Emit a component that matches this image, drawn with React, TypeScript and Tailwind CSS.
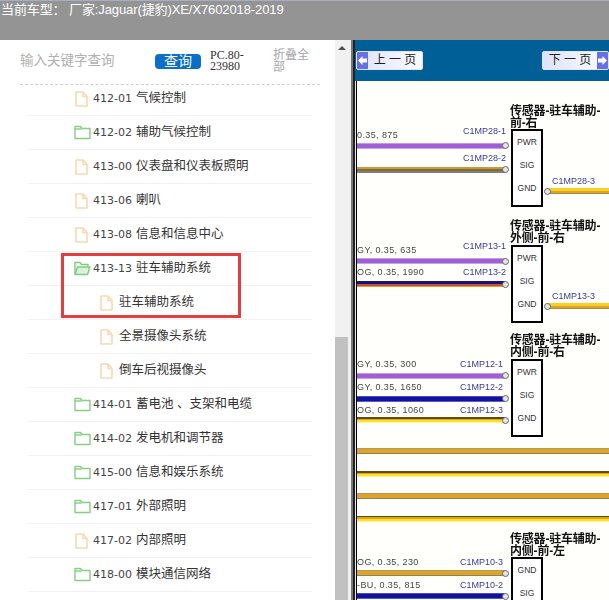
const tree = [
  { code: "412-01", name: "气候控制", icon: "file" },
  { code: "412-02", name: "辅助气候控制", icon: "folder" },
  { code: "413-00", name: "仪表盘和仪表板照明", icon: "file" },
  { code: "413-06", name: "喇叭", icon: "file" },
  { code: "413-08", name: "信息和信息中心", icon: "file" },
  { code: "413-13", name: "驻车辅助系统", icon: "open" },
  { name: "驻车辅助系统", icon: "file", child: true },
  { name: "全景摄像头系统", icon: "file", child: true },
  { name: "倒车后视摄像头", icon: "file", child: true },
  { code: "414-01", name: "蓄电池 、支架和电缆", icon: "folder" },
  { code: "414-02", name: "发电机和调节器", icon: "folder" },
  { code: "415-00", name: "信息和娱乐系统", icon: "folder" },
  { code: "417-01", name: "外部照明", icon: "folder" },
  { code: "417-02", name: "内部照明", icon: "file" },
  { code: "418-00", name: "模块通信网络", icon: "folder" },
];

const PURPLE = "linear-gradient(#c49ae6 0 20%, #a05fd4 20% 80%, #c9a2ea 80%)";
const BROWN = "linear-gradient(#c89a3a 0 30%, #8a6a2c 30% 60%, #7d7d7d 60%)";
const NAVY_RED = "linear-gradient(#14147a 0 50%, #c8503a 50% 80%, #d9a030 80%)";
const NAVY = "linear-gradient(#4a4ad0 0 20%, #12129c 20% 80%, #5a5ac8 80%)";
const GOLD = "linear-gradient(#b89a50 0 18%, #dca42a 18% 82%, #8d8256 82%)";
const YELLOW = "linear-gradient(#5c4a20 0 25%, #e0a020 25% 50%, #ffe21e 50% 85%, #fff4a0 85%)";
const AMBER = "linear-gradient(#f7d020 0 45%, #dca42a 45% 80%, #a88a40 80%)";

const wires = [
  { y: 143, x: 357, w: 148, bg: PURPLE },
  { y: 167, x: 357, w: 148, bg: BROWN },
  { y: 188, x: 547, w: 62, bg: AMBER },
  { y: 258, x: 357, w: 148, bg: PURPLE },
  { y: 281, x: 357, w: 148, bg: NAVY_RED },
  { y: 303, x: 547, w: 62, bg: AMBER },
  { y: 373, x: 357, w: 148, bg: PURPLE },
  { y: 396, x: 357, w: 148, bg: NAVY },
  { y: 417, x: 357, w: 148, bg: YELLOW },
  { y: 448, x: 357, w: 252, bg: GOLD },
  { y: 471, x: 357, w: 252, bg: YELLOW },
  { y: 493, x: 357, w: 252, bg: GOLD },
  { y: 516, x: 357, w: 252, bg: YELLOW },
  { y: 570, x: 357, w: 148, bg: GOLD },
  { y: 593, x: 357, w: 148, bg: NAVY },
];

const labels = [
  { x: 463, y: 131, t: "C1MP28-1" },
  { x: 463, y: 158, t: "C1MP28-2" },
  { x: 552, y: 181, t: "C1MP28-3" },
  { x: 463, y: 246, t: "C1MP13-1" },
  { x: 463, y: 272, t: "C1MP13-2" },
  { x: 552, y: 296, t: "C1MP13-3" },
  { x: 460, y: 364, t: "C1MP12-1" },
  { x: 460, y: 387, t: "C1MP12-2" },
  { x: 460, y: 410, t: "C1MP12-3" },
  { x: 460, y: 562, t: "C1MP10-3" },
  { x: 460, y: 585, t: "C1MP10-2" },
];

const specs = [
  { y: 135, t: "0.35, 875" },
  { y: 250, t: "GY, 0.35, 635" },
  { y: 272, t: "OG, 0.35, 1990" },
  { y: 364, t: "GY, 0.35, 300" },
  { y: 387, t: "GY, 0.35, 1650" },
  { y: 410, t: "OG, 0.35, 1060" },
  { y: 562, t: "OG, 0.35, 230" },
  { y: 585, t: "-BU, 0.35, 815" },
];

const sensors = [
  { y: 105, box: 129, h: 78, lines: ["传感器-驻车辅助-", "前-右"], pins: ["PWR", "SIG", "GND"] },
  { y: 220, box: 245, h: 78, lines: ["传感器-驻车辅助-", "外侧-前-右"], pins: ["PWR", "SIG", "GND"] },
  { y: 334, box: 359, h: 78, lines: ["传感器-驻车辅助-", "内侧-前-右"], pins: ["PWR", "SIG", "GND"] },
  { y: 533, box: 557, h: 78, lines: ["传感器-驻车辅助-", "内侧-前-左"], pins: ["GND", "SIG"] },
];

const pinDots = [
  [505, 145], [505, 169], [547, 191],
  [505, 261], [505, 284], [547, 306],
  [505, 375], [505, 398], [505, 420],
  [505, 573], [505, 596],
];

function FileIcon() {
  return (
    <svg width="15" height="16" viewBox="0 0 15 16" fill="none" stroke="#f7d9b2" strokeWidth="1.6" className="shrink-0">
      <path d="M2 1h7l4 4.5V15H2z" strokeLinejoin="round" />
      <path d="M9 1v4.5h4" />
    </svg>
  );
}

function FolderIcon() {
  return (
    <svg width="17" height="15" viewBox="0 0 17 15" fill="none" stroke="#86cd86" strokeWidth="1.4" className="shrink-0">
      <path d="M1 13.5V1.5h5.5l1.5 2h8v10z" strokeLinejoin="round" />
      <path d="M1 4h6.5" />
    </svg>
  );
}

function OpenFolderIcon() {
  return (
    <svg width="17" height="15" viewBox="0 0 17 15" fill="none" stroke="#7fcb7f" strokeWidth="1.4" className="shrink-0">
      <path d="M1 13.5V1.5h5l1.5 2H14V6" strokeLinejoin="round" />
      <path d="M1 13.5 3.5 6H16l-2.5 7.5z" strokeLinejoin="round" fill="#d9f1d9" />
    </svg>
  );
}

function PageButton({ label, side }: { label: string; side: "left" | "right" }) {
  const arrow = (
    <div className="flex h-full w-[11px] items-center justify-center bg-[#6670e4]">
      <svg width="9" height="9" viewBox="0 0 9 9" fill="#fff">
        {side === "left" ? <path d="M0 4.5 4.5 0v2.5H9v4H4.5V9z" /> : <path d="M9 4.5 4.5 0v2.5H0v4h4.5V9z" />}
      </svg>
    </div>
  );
  return (
    <div className="flex h-[19px] w-[67px] items-center overflow-hidden rounded-[2px] border border-[#dfe4fb] bg-gradient-to-r from-[#dfe3fa] to-[#fbfbff]">
      {side === "left" && arrow}
      <span className="flex-1 text-center text-[12px] whitespace-pre text-[#222]">{label}</span>
      {side === "right" && arrow}
    </div>
  );
}

export default function App() {
  return (
    <div className="h-[600px] w-[609px] overflow-hidden bg-white font-['Liberation_Sans','Noto_Sans_CJK_SC',sans-serif]">
      <div className="h-10 border-t border-[#a9adc4] bg-[#949494] pl-px text-[13px] leading-[17px] tracking-[-0.1px] text-white">
        当前车型： 厂家:Jaguar(捷豹)XE/X7602018-2019
      </div>
      <div className="flex h-[560px]">
        <div className="relative w-[335px] shrink-0 overflow-hidden">
          <div className="mx-5 flex h-[45px] w-[300px] items-center border-b border-dashed border-[#cfcfcf] pb-[2px]">
            <span className="w-[135px] text-[13.5px] text-[#b0b0b0]">输入关键字查询</span>
            <button className="flex h-[15px] w-[46px] items-center justify-center rounded-[4px] bg-[#0a6fc9] text-[14px] text-white">
              查询
            </button>
            <span className="ml-[9px] w-[50px] font-['Liberation_Serif',serif] text-[12px] leading-[11px] text-[#333]">
              PC.80-23980
            </span>
            <span className="ml-[13px] w-[37px] text-[12px] leading-[12px] text-[#a5a5a5]">折叠全部</span>
          </div>
          <div className="-mt-[3px]">
            {tree.map((row, i) => (
              <div
                key={i}
                className={`ml-7 flex h-[34px] w-[284px] items-center border-b border-[#f1f1f1] text-[12.5px] text-[#333] ${row.child ? "pl-[71px]" : "pl-[46px]"}`}
              >
                <div className={`flex items-center ${row.child ? "w-[20px]" : "w-[19px]"}`}>
                  {row.icon === "file" && <FileIcon />}
                  {row.icon === "folder" && <FolderIcon />}
                  {row.icon === "open" && <OpenFolderIcon />}
                </div>
                <span className="whitespace-nowrap">
                  {row.code && (
                    <span className="mr-[4px] font-['DejaVu_Sans',sans-serif] text-[11px] text-[#444]">{row.code}</span>
                  )}
                  {row.name}
                </span>
              </div>
            ))}
          </div>
          {/* red mark over the selected rows */}
          <div className="absolute left-[61px] top-[213px] h-[65px] w-[180px] border-[3px] border-[#e53e3e]" />
        </div>
        <div className="flex w-4 shrink-0 flex-col bg-[#f1f1f1] pr-[3px]">
          <div className="flex h-[297px] justify-center pt-[6px]">
            <div className="h-0 w-0 border-x-[4px] border-b-[4px] border-x-transparent border-b-[#505050]" />
          </div>
          <div className="flex-1 bg-[#c1c1c1]" />
        </div>
        <div className="w-[4px] shrink-0 border-r-2 border-[#222] bg-[#777]" />
        <div className="flex min-w-0 flex-1 flex-col">
          <div className="flex h-[41px] items-center justify-between bg-[#005f96] pb-[1px] pl-px">
            <PageButton label="上 一 页" side="left" />
            <PageButton label="下 一 页" side="right" />
          </div>
          <div className="flex-1 border-l border-[#e8e8e8]">
            <div className="h-full border-l-[1.5px] border-black bg-[#fffffb]" />
          </div>
        </div>
      </div>

      {/* wiring diagram: free canvas over the right pane, in page coordinates */}
      <div className="pointer-events-none absolute left-0 top-0 h-[600px] w-[609px] overflow-hidden blur-[0.3px]">
        {wires.map((w, i) => (
          <div
            key={i}
            className="absolute h-[6px]"
            style={{ left: w.x, top: w.y, width: w.w, background: w.bg }}
          />
        ))}
        {pinDots.map(([x, y], i) => (
          <div
            key={i}
            className="absolute h-[7px] w-[7px] rounded-full border border-[#666] bg-[#e4e4e4]"
            style={{ left: x - 3, top: y - 3 }}
          />
        ))}
        {specs.map((s, i) => (
          <div
            key={i}
            className="absolute text-[9px] leading-[11px] tracking-[0.4px] whitespace-nowrap text-[#444]"
            style={{ left: 357, top: s.y - 5 }}
          >
            {s.t}
          </div>
        ))}
        {labels.map((l, i) => (
          <div
            key={i}
            className="absolute text-[9px] leading-[11px] whitespace-nowrap text-[#3a3a9a]"
            style={{ left: l.x, top: l.y - 5 }}
          >
            {l.t}
          </div>
        ))}
        {sensors.map((s, i) => (
          <div key={i}>
            <div
              className="absolute text-[12px] leading-[12px] font-bold tracking-[-0.2px] whitespace-nowrap text-[#111]"
              style={{ left: 510, top: s.y }}
            >
              {s.lines[0]}
              <br />
              {s.lines[1]}
            </div>
            <div
              className="absolute flex w-[32px] flex-col items-center gap-[12px] border-2 border-black bg-white pt-[6px] text-[8.5px] leading-[11px] text-[#333]"
              style={{ left: 511, top: s.box, height: s.h }}
            >
              {s.pins.map((p) => (
                <span key={p}>{p}</span>
              ))}
            </div>
          </div>
        ))}
      </div>
    </div>
  );
}
